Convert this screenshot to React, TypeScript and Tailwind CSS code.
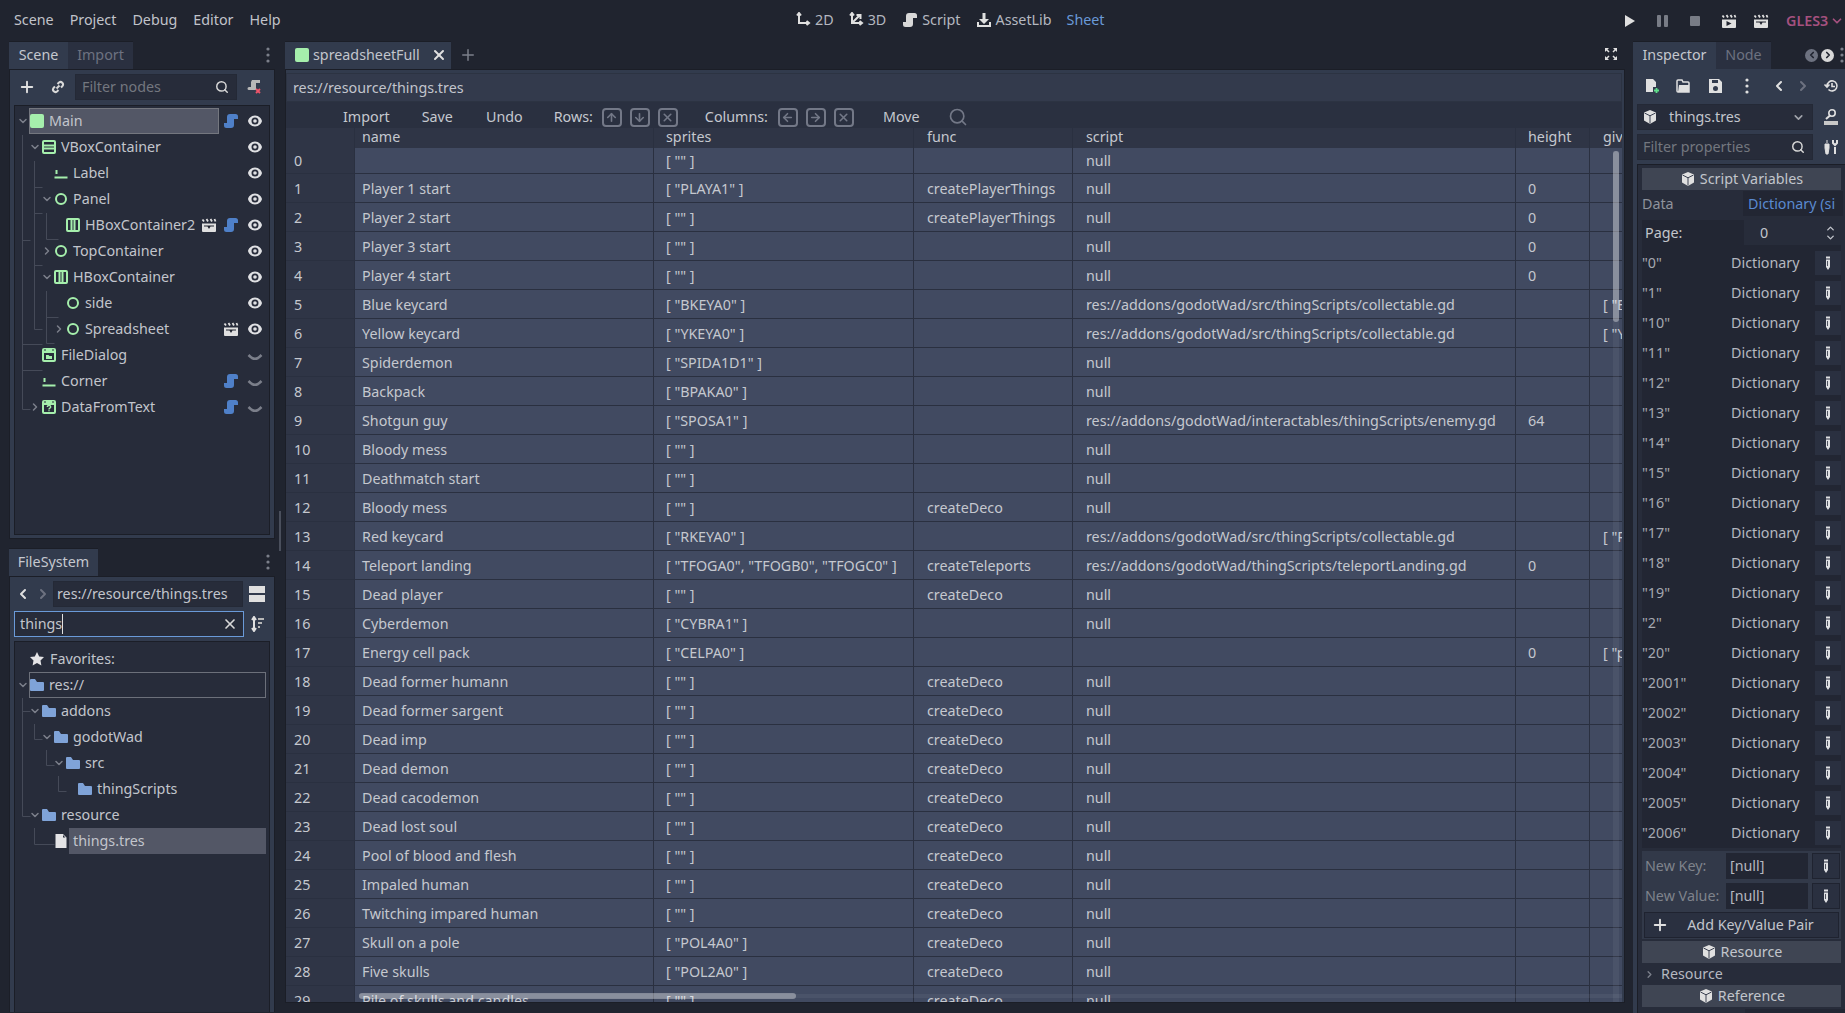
import { ArrowDown, ArrowLeft, ArrowRight, ArrowUp, ChevronDown, ChevronRight, ChevronLeft, ChevronUp, Plus, Search, X } from "lucide-react";
import type { ReactNode } from "react";

const GREEN = "#a5efac";

const Svg = ({ children, size = 16, className = "" }: { children: ReactNode; size?: number; className?: string }) => (
  <svg width={size} height={size} viewBox="0 0 16 16" className={`shrink-0 ${className}`}>
    {children}
  </svg>
);

const NodeIcon = () => <Svg><rect x="1" y="1" width="14" height="14" rx="2" fill={GREEN} /></Svg>;
const VBoxIcon = () => (
  <Svg><rect x="2" y="2" width="12" height="12" rx="1" fill="none" stroke={GREEN} strokeWidth="2" /><path d="M2 6.500h12M2 9.500h12" stroke={GREEN} strokeWidth="2" /></Svg>
);
const HBoxIcon = () => (
  <Svg><rect x="2" y="2" width="12" height="12" rx="1" fill="none" stroke={GREEN} strokeWidth="2" /><path d="M6.500 2v12M9.500 2v12" stroke={GREEN} strokeWidth="2" /></Svg>
);
const RingIcon = () => <Svg><circle cx="8" cy="8" r="5" fill="none" stroke={GREEN} strokeWidth="2" /></Svg>;
const LabelIcon = () => <Svg><path d="M3.500 5v4M1.500 12.500h13" stroke={GREEN} strokeWidth="2" fill="none" /></Svg>;
const WindowIcon = ({ q }: { q?: boolean }) => (
  <Svg>
    <path d="M3 1h10a2 2 0 0 1 2 2v10a2 2 0 0 1-2 2H3a2 2 0 0 1-2-2V3a2 2 0 0 1 2-2z" fill={GREEN} />
    <rect x="3" y="6" width="10" height="7" fill="#272c3a" />
    <path d="M3 3h2M11 3h2" stroke="#272c3a" strokeWidth="1" />
    {q ? (
      <path d="M6.300 8a1.700 1.500 0 1 1 2.600 1.200c-.6.4-.9.6-.9 1.200M8 11.200v1" stroke={GREEN} strokeWidth="1.400" fill="none" />
    ) : (
      <path d="M5 8h2.500l1 1H11v3H5z" fill={GREEN} />
    )}
  </Svg>
);
const ScriptIcon = () => (
  <Svg>
    <path d="M7 1a3 3 0 0 0-3 3v6H1v2.500A2.500 2.500 0 0 0 3.500 15H8a3 3 0 0 0 3-3V6h4V3.500A2.500 2.500 0 0 0 12.500 1z" fill="#4f80c8" />
  </Svg>
);
const ClapperIcon = ({ play }: { play?: boolean }) => (
  <Svg>
    <path d="M1 6.500h14V14a1 1 0 0 1-1 1H2a1 1 0 0 1-1-1z" fill="#e0e0e0" />
    <path d="M1.500 2.500l1.500 2M5.500 2l1.500 2.500M9.500 2l1.500 2.500M13.500 2l1 2.500" stroke="#e0e0e0" strokeWidth="1.800" />
    {play ? <path d="M5.500 8l5 2.500-5 2.500z" fill="#20242f" /> : <path d="M3 8.500h10v1H9.500l-1.500 2.500-1.500-2.500H3z" fill="#20242f" />}
  </Svg>
);
const Eye = () => (
  <Svg>
    <path fillRule="evenodd" d="M8 2.500C4 2.500 1.300 5.800 1 8c.3 2.200 3 5.500 7 5.500s6.700-3.300 7-5.500c-.3-2.200-3-5.500-7-5.500zM8 4.500a3.500 3.500 0 1 1 0 7 3.500 3.500 0 0 1 0-7z" fill="#dfe0e3" />
    <circle cx="8" cy="8" r="1.800" fill="#dfe0e3" />
  </Svg>
);
const Hidden = () => <Svg><path d="M1.500 8q2 2 3.500 3q3 1.500 6 0q1.500-1 3.500-3" fill="none" stroke="#7b7f8a" strokeWidth="2.600" /></Svg>;
const Folder = () => <Svg><path d="M2 2h4l2 3h6a1 1 0 0 1 1 1v7a1 1 0 0 1-1 1H2a1 1 0 0 1-1-1V3a1 1 0 0 1 1-1z" fill="#7fa3d8" /></Svg>;
const FileIcon = () => (
  <Svg><path fillRule="evenodd" d="M2.500 1H10l3.500 3.500V15h-11zM10 2v2.500h2.500z" fill="#e4e4e6" /></Svg>
);
const Pencil = () => (
  <Svg><path fillRule="evenodd" d="M6 1.500h4v2H6zM6 4.500h4V12l-2 3-2-3zM7 6v5h.8V6z" fill="#dfe0e3" /></Svg>
);
const Cube = ({ size = 16 }: { size?: number }) => (
  <Svg size={size}>
    <path d="M8 1l6 2.500v8L8 15l-6-3.500v-8z" fill="#e0e0e0" />
    <path d="M2.500 4L8 6.800 13.500 4M8 7v7.500" stroke="#3a4050" strokeWidth="1" fill="none" />
  </Svg>
);
const Arrow = ({ kind, text }: { kind: "2d" | "3d"; text: string }) => (
  <span className="flex items-center gap-[4px] text-[#b5b8c0]">
    <Svg>
      <path d="M4 1v10h10M2 3.500l2-2.500 2 2.500M11.500 9l2.500 2-2.500 2" fill="none" stroke="#e0e0e0" strokeWidth="2" />
      {kind === "3d" && <path d="M4 11l8-8M8.500 3H12.500v4" fill="none" stroke="#e0e0e0" strokeWidth="2" />}
    </Svg>
    {text}
  </span>
);

const Tab = ({ label, active, className }: { label: string; active?: boolean; className: string }) => (
  <div className={`flex items-center justify-center border-t border-[#1b1e27] pb-[2px] ${active ? "bg-[#323b4d] text-[#c5c8cf]" : "bg-[#2a3040] text-[#6d7280]"} ${className}`}>
    {label}
  </div>
);

const Dots = () => (
  <svg width="4" height="16" viewBox="0 0 4 16" className="shrink-0"><circle cx="2" cy="2" r="1.600" fill="#7b7f8a" /><circle cx="2" cy="8" r="1.600" fill="#7b7f8a" /><circle cx="2" cy="14" r="1.600" fill="#7b7f8a" /></svg>
);

interface TreeRow {
  depth: number;
  label: string;
  icon: ReactNode;
  arrow?: "down" | "right";
  extra?: ReactNode;
  trail?: ReactNode;
  box?: string;
}

const Row = ({ depth, label, icon, arrow, extra, trail, box }: TreeRow) => (
  <div className="relative flex h-[26px] items-center">
    {box && <div className={`absolute top-0 bottom-0 ${box}`} />}
    <div className="relative flex items-center" style={{ paddingLeft: depth * 12 }}>
      <span className="ml-[1px] flex w-[13px] justify-center text-[#7b7f8a]">
        {arrow === "down" && <ChevronDown size={12} strokeWidth={3} />}
        {arrow === "right" && <ChevronRight size={12} strokeWidth={3} />}
      </span>
      {icon}
      <span className="ml-[4px] text-[#c2c5cc]">{label}</span>
      {extra && <span className="ml-[6px]">{extra}</span>}
    </div>
    <div className="absolute top-[5px] right-[6px] flex items-center gap-[8px]">{trail}</div>
  </div>
);

const sceneRows: TreeRow[] = [
  { depth: 0, label: "Main", icon: <NodeIcon />, arrow: "down", trail: <><ScriptIcon /><Eye /></>, box: "left-[14px] w-[190px] bg-[#535766] border border-[#74777f]" },
  { depth: 1, label: "VBoxContainer", icon: <VBoxIcon />, arrow: "down", trail: <Eye /> },
  { depth: 2, label: "Label", icon: <LabelIcon />, trail: <Eye /> },
  { depth: 2, label: "Panel", icon: <RingIcon />, arrow: "down", trail: <Eye /> },
  { depth: 3, label: "HBoxContainer2", icon: <HBoxIcon />, extra: <ClapperIcon />, trail: <><ScriptIcon /><Eye /></> },
  { depth: 2, label: "TopContainer", icon: <RingIcon />, arrow: "right", trail: <Eye /> },
  { depth: 2, label: "HBoxContainer", icon: <HBoxIcon />, arrow: "down", trail: <Eye /> },
  { depth: 3, label: "side", icon: <RingIcon />, trail: <Eye /> },
  { depth: 3, label: "Spreadsheet", icon: <RingIcon />, arrow: "right", trail: <><ClapperIcon /><Eye /></> },
  { depth: 1, label: "FileDialog", icon: <WindowIcon />, trail: <Hidden /> },
  { depth: 1, label: "Corner", icon: <LabelIcon />, trail: <><ScriptIcon /><Hidden /></> },
  { depth: 1, label: "DataFromText", icon: <WindowIcon q />, arrow: "right", trail: <><ScriptIcon /><Hidden /></> },
];

const fileRows: TreeRow[] = [
  { depth: 0, label: "res://", icon: <Folder />, arrow: "down", box: "left-[14px] right-[3px] border border-[#6c707a]" },
  { depth: 1, label: "addons", icon: <Folder />, arrow: "down" },
  { depth: 2, label: "godotWad", icon: <Folder />, arrow: "down" },
  { depth: 3, label: "src", icon: <Folder />, arrow: "down" },
  { depth: 4, label: "thingScripts", icon: <Folder /> },
  { depth: 1, label: "resource", icon: <Folder />, arrow: "down" },
  { depth: 2, label: "things.tres", icon: <FileIcon />, box: "left-[54px] right-[3px] bg-[#535766]" },
];

const COLLECT = "res://addons/godotWad/src/thingScripts/collectable.gd";
const deco = (name: string, sprite = '[ "" ]') => [name, sprite, "createDeco", "null", "", ""];

const sheet: string[][] = [
  ["", '[ "" ]', "", "null", "", ""],
  ["Player 1 start", '[ "PLAYA1" ]', "createPlayerThings", "null", "0", ""],
  ["Player 2 start", '[ "" ]', "createPlayerThings", "null", "0", ""],
  ["Player 3 start", '[ "" ]', "", "null", "0", ""],
  ["Player 4 start", '[ "" ]', "", "null", "0", ""],
  ["Blue keycard", '[ "BKEYA0" ]', "", COLLECT, "", '[ "BLUE" ]'],
  ["Yellow keycard", '[ "YKEYA0" ]', "", COLLECT, "", '[ "YELLOW" ]'],
  ["Spiderdemon", '[ "SPIDA1D1" ]', "", "null", "", ""],
  ["Backpack", '[ "BPAKA0" ]', "", "null", "", ""],
  ["Shotgun guy", '[ "SPOSA1" ]', "", "res://addons/godotWad/interactables/thingScripts/enemy.gd", "64", ""],
  ["Bloody mess", '[ "" ]', "", "null", "", ""],
  ["Deathmatch start", '[ "" ]', "", "null", "", ""],
  deco("Bloody mess"),
  ["Red keycard", '[ "RKEYA0" ]', "", COLLECT, "", '[ "RED" ]'],
  ["Teleport landing", '[ "TFOGA0", "TFOGB0", "TFOGC0" ]', "createTeleports", "res://addons/godotWad/thingScripts/teleportLanding.gd", "0", ""],
  deco("Dead player"),
  ["Cyberdemon", '[ "CYBRA1" ]', "", "null", "", ""],
  ["Energy cell pack", '[ "CELPA0" ]', "", "", "0", '[ "plasma" ]'],
  deco("Dead former humann"),
  deco("Dead former sargent"),
  deco("Dead imp"),
  deco("Dead demon"),
  deco("Dead cacodemon"),
  deco("Dead lost soul"),
  deco("Pool of blood and flesh"),
  deco("Impaled human"),
  deco("Twitching impared human"),
  deco("Skull on a pole", '[ "POL4A0" ]'),
  deco("Five skulls", '[ "POL2A0" ]'),
  deco("Pile of skulls and candles"),
];

const COLS = "grid grid-cols-[69px_299px_260px_159px_443px_74px_33px]";
const CELL = "overflow-hidden whitespace-nowrap border-r border-[#2a3040]";
const PADS = ["pl-[7px]", "pl-[12px]", "pl-[13px]", "pl-[13px]", "pl-[12px]", "pl-[13px]"];

const ArrowBox = ({ children, className = "" }: { children: ReactNode; className?: string }) => (
  <span className={`flex h-[19px] w-[20px] items-center justify-center rounded-[4px] border-2 border-[#737887] text-[#737887] ${className}`}>{children}</span>
);

const SheetRow = ({ idx, cells }: { idx: number; cells: string[] }) => (
  <div className={`${COLS} border-b border-[#2a3040] text-[#c5c8cf] ${idx === 0 ? "h-[26px]" : "h-[29px]"}`}>
    <div className={`${CELL} bg-[#2f3546] pl-[8px] ${idx === 0 ? "leading-[26px]" : "leading-[30px]"}`}>{idx}</div>
    {cells.map((c, i) => (
      <div key={i} className={`${CELL} bg-[#414a61] ${PADS[i]} ${idx === 0 ? "leading-[26px]" : "leading-[30px]"}`}>{c}</div>
    ))}
  </div>
);

const dict = ["0", "1", "10", "11", "12", "13", "14", "15", "16", "17", "18", "19", "2", "20", "2001", "2002", "2003", "2004", "2005", "2006"];

const SectionBar = ({ label }: { label: string }) => (
  <div className="mx-[4px] flex h-[22px] items-center justify-center gap-[4px] bg-[#3f4553] text-[#c2c5cc]">
    <Cube />
    {label}
  </div>
);

export default function App() {
  return (
    <div className="flex h-[1013px] w-[1845px] flex-col overflow-hidden bg-[#20242f] font-['Noto_Sans',sans-serif] text-[14.3px]">
      {/* top menu */}
      <div className="relative flex h-[41px] shrink-0 items-center pb-[2px] text-[#c0c3ca]">
        <div className="ml-[14px] flex gap-[16px]">
          <span>Scene</span><span>Project</span><span>Debug</span><span>Editor</span><span>Help</span>
        </div>
        <div className="absolute left-[795px] top-[9px] flex items-center">
          <Arrow kind="2d" text="2D" />
          <span className="ml-[14px]"><Arrow kind="3d" text="3D" /></span>
          <span className="ml-[16px] flex items-center gap-[4px] text-[#b5b8c0]">
            <Svg><path d="M7 1a3 3 0 0 0-3 3v6H1v2.500A2.500 2.500 0 0 0 3.500 15H8a3 3 0 0 0 3-3V6h4V3.500A2.500 2.500 0 0 0 12.500 1z" fill="#d8d8d8" /></Svg>
            Script
          </span>
          <span className="ml-[15px] flex items-center gap-[4px] text-[#b5b8c0]">
            <Svg><path d="M6.500 1h3v6H13l-5 5-5-5h3.500zM1 10h2v3h10v-3h2v5H1z" fill="#e0e0e0" /></Svg>
            AssetLib
          </span>
          <span className="ml-[15px] text-[#6a9ad8]">Sheet</span>
        </div>
        <div className="absolute left-[1625px] top-[10px] flex items-center">
          <svg width="10" height="14" viewBox="0 0 10 14"><path d="M0 1l10 6-10 6z" fill="#e0e0e0" /></svg>
          <svg width="11" height="12" viewBox="0 0 11 12" className="ml-[22px]"><path d="M0 1a1 1 0 0 1 1-1h2a1 1 0 0 1 1 1v10a1 1 0 0 1-1 1H1a1 1 0 0 1-1-1zM7 1a1 1 0 0 1 1-1h2a1 1 0 0 1 1 1v10a1 1 0 0 1-1 1H8a1 1 0 0 1-1-1z" fill="#787c86" /></svg>
          <svg width="10" height="10" viewBox="0 0 10 10" className="ml-[22px]"><rect width="10" height="10" rx="1" fill="#787c86" /></svg>
          <span className="ml-[21px]"><ClapperIcon play /></span>
          <span className="ml-[16px]"><ClapperIcon /></span>
          <span className="ml-[17px] font-semibold text-[#a5517f]">GLES3</span>
          <ChevronDown size={14} className="ml-[2px] text-[#a5517f]" strokeWidth={3} />
        </div>
      </div>

      <div className="flex min-h-0 flex-1">
        {/* left docks */}
        <div className="ml-[9px] flex w-[266px] shrink-0 flex-col">
          <div className="flex h-[28px] shrink-0 items-center">
            <Tab label="Scene" active className="h-full w-[59px]" />
            <Tab label="Import" className="h-full w-[65px]" />
            <div className="ml-auto mr-[5px]"><Dots /></div>
          </div>
          <div className="flex h-[470px] shrink-0 flex-col border border-[#1b1e27] bg-[#323b4d] px-[4px] pt-[4px] pb-[3px]">
            <div className="flex h-[26px] shrink-0 items-center">
              <Plus size={18} strokeWidth={2.500} className="ml-[4px] text-[#e0e0e0]" />
              <svg width="16" height="16" viewBox="0 0 16 16" className="ml-[14px]"><path d="M6.500 9.500l3-3M5 7.500L3.500 9a2.500 2.500 0 0 0 3.500 3.500L8.500 11M7.500 5L9 3.500A2.500 2.500 0 0 1 12.500 7L11 8.500" fill="none" stroke="#d8d8d8" strokeWidth="2" /></svg>
              <div className="ml-[9px] flex h-[26px] w-[162px] items-center justify-between border border-[#242936] bg-[#272c3a] px-[6px] text-[#73777f]">
                Filter nodes
                <Search size={14} strokeWidth={2.500} className="mr-[1px] text-[#d8d8d8]" />
              </div>
              <svg width="16" height="16" viewBox="0 0 16 16" className="ml-[9px]"><path d="M6 1h8v3h-4v7H3a1 1 0 0 1 0-3h2V3z" fill="#b8b8b8" /><path d="M10 10l4 4M14 10l-4 4" stroke="#f0556a" strokeWidth="1.800" /></svg>
            </div>
            <div className="relative mt-[5px] min-h-0 flex-1 border border-[#1b1e27] bg-[#272c3a] py-[2px] pr-0">
              <svg className="absolute left-0 top-0" width="80" height="320" fill="none" stroke="#454a58" strokeWidth="1">
                <path d="M7.500 29v274.500h8M7.500 134.500h8M7.500 238.500h20M7.500 264.500h20M19.500 55v168.500h8M19.500 81.500h8M19.500 107.500h8M19.500 159.500h8M31.500 107v26.500h12M31.500 185v52.500h8M31.500 211.500h12" />
              </svg>
              {sceneRows.map((r) => <Row key={r.label} {...r} />)}
            </div>
          </div>
          <div className="mt-[9px] flex h-[28px] shrink-0 items-center">
            <Tab label="FileSystem" active className="h-full w-[89px]" />
            <div className="ml-auto mr-[5px]"><Dots /></div>
          </div>
          <div className="flex h-[436px] shrink-0 flex-col border border-b-0 border-[#1b1e27] bg-[#323b4d] px-[4px] pt-[4px]">
            <div className="flex h-[26px] shrink-0 items-center">
              <ChevronLeft size={16} strokeWidth={3} className="ml-[1px] text-[#e0e0e0]" />
              <ChevronRight size={16} strokeWidth={3} className="ml-[4px] text-[#6d7280]" />
              <div className="ml-[2px] flex h-[26px] w-[190px] items-center border border-[#242936] bg-[#272c3a] px-[3px] text-[#c2c5cc]">res://resource/things.tres</div>
              <div className="ml-[6px] flex flex-col gap-[2px]"><span className="h-[7px] w-[16px] bg-[#e0e0e0]" /><span className="h-[7px] w-[16px] bg-[#e0e0e0]" /></div>
            </div>
            <div className="mt-[4px] flex h-[26px] shrink-0 items-center">
              <div className="flex h-[26px] w-[230px] items-center justify-between border border-[#6a9ad8] bg-[#272c3a] px-[5px] text-[#c2c5cc]">
                <span className="border-r border-[#e0e0e0] leading-[20px]">things</span>
                <X size={16} strokeWidth={2.500} className="text-[#d8d8d8]" />
              </div>
              <svg width="16" height="16" viewBox="0 0 16 16" className="ml-[6px]"><path d="M4 1v14M2 4l2-3 2 3M2 12l2 3 2-3" fill="none" stroke="#e0e0e0" strokeWidth="2" /><path d="M8 3h6M8 7h4M8 11h2" stroke="#b8b8b8" strokeWidth="2" /></svg>
            </div>
            <div className="relative mt-[4px] min-h-0 flex-1 border border-b-0 border-[#1b1e27] bg-[#272c3a] pt-[4px]">
              <svg className="absolute left-0 top-0" width="80" height="230" fill="none" stroke="#454a58" strokeWidth="1">
                <path d="M7.500 56v118.500h8M7.500 69.500h8M19.500 82v15.500h8M19.500 186v16.500h20M31.500 108v15.500h8M43.500 134v15.500h8" />
              </svg>
              <div className="flex h-[26px] items-center pl-[14px] text-[#c2c5cc]">
                <svg width="16" height="16" viewBox="0 0 16 16" className="mr-[5px]"><path d="M8 1l2.200 4.500 4.800.6-3.500 3.400.9 4.900L8 11.900l-4.400 2.500.9-4.900L1 6.100l4.800-.6z" fill="#e4e4e6" /></svg>
                Favorites:
              </div>
              {fileRows.map((r) => <Row key={r.label} {...r} />)}
            </div>
          </div>
        </div>

        {/* splitter grab */}
        <div className="flex w-[10px] shrink-0 justify-center"><span className="mt-[470px] h-[40px] w-[2px] bg-[#4a4f5c]" /></div>

        {/* spreadsheet */}
        <div className="flex w-[1340px] shrink-0 flex-col">
          <div className="flex h-[28px] shrink-0 items-center">
            <div className="flex h-full w-[166px] items-center border-t border-[#1b1e27] bg-[#323b4d] pb-[1px] pl-[10px] text-[#c2c5cc]">
              <span className="h-[14px] w-[14px] rounded-[2px] bg-[#a5efac]" />
              <span className="ml-[4px]">spreadsheetFull</span>
              <X size={16} strokeWidth={3} className="ml-[11px] text-[#e0e0e0]" />
            </div>
            <Plus size={18} className="ml-[8px] text-[#7b7f8a]" />
            <svg width="16" height="16" viewBox="0 0 16 16" className="mb-[2px] ml-auto mr-[6px]"><path d="M2 2h4L2 6zM14 2v4l-4-4zM2 14v-4l4 4zM14 14h-4l4-4z" fill="#e0e0e0" /><path d="M3 3l3 3M13 3l-3 3M3 13l3-3M13 13l-3-3" stroke="#e0e0e0" strokeWidth="1.500" /></svg>
          </div>
          <div className="flex h-[934px] shrink-0 flex-col border border-[#1b1e27] bg-[#323b4d] pr-[2px]">
            <div className="mt-[3px] flex h-[29px] shrink-0 items-center border border-[#2c3342] bg-[#333a4c] pl-[6px] text-[#c2c5cc]">res://resource/things.tres</div>
            <div className="flex h-[26px] shrink-0 items-center bg-[#2a3040] pl-[57px] pt-[4px] text-[#c5c8cf]">
              <span>Import</span>
              <span className="ml-[32px]">Save</span>
              <span className="ml-[33px]">Undo</span>
              <span className="ml-[31px]">Rows:</span>
              <ArrowBox className="ml-[9px]"><ArrowUp size={13} strokeWidth={3} /></ArrowBox>
              <ArrowBox className="ml-[8px]"><ArrowDown size={13} strokeWidth={3} /></ArrowBox>
              <ArrowBox className="ml-[8px]"><X size={13} strokeWidth={3} /></ArrowBox>
              <span className="ml-[27px]">Columns:</span>
              <ArrowBox className="ml-[10px]"><ArrowLeft size={13} strokeWidth={3} /></ArrowBox>
              <ArrowBox className="ml-[8px]"><ArrowRight size={13} strokeWidth={3} /></ArrowBox>
              <ArrowBox className="ml-[8px]"><X size={13} strokeWidth={3} /></ArrowBox>
              <span className="ml-[29px]">Move</span>
              <Search size={20} strokeWidth={2} className="ml-[28px] text-[#737887]" />
            </div>
            <div className="relative min-h-0 flex-1 overflow-hidden">
              <div className={`${COLS} h-[20px] bg-[#2f3546] text-[#c5c8cf]`}>
                {["", "name", "sprites", "func", "script", "height", "give"].map((h, i) => (
                  <div key={i} className={`${CELL} leading-[18px] ${i === 0 ? "" : PADS[i - 1]}`}>{h}</div>
                ))}
              </div>
              {sheet.map((cells, i) => <SheetRow key={i} idx={i} cells={cells} />)}
              <div className="absolute right-[3px] top-[23px] bottom-0 w-[6px] bg-white/5" />
              <div className="absolute right-[3px] top-[23px] h-[171px] w-[6px] rounded-[3px] bg-white/35" />
              <div className="absolute left-[73px] right-0 bottom-[4px] h-[4px] bg-white/5" />
              <div className="absolute left-[73px] bottom-[3px] h-[6px] w-[437px] rounded-[3px] bg-white/35" />
            </div>
          </div>
        </div>

        {/* inspector */}
        <div className="ml-[8px] flex w-[212px] shrink-0 flex-col">
          <div className="flex h-[28px] shrink-0 items-center">
            <Tab label="Inspector" active className="h-full w-[83px]" />
            <Tab label="Node" className="h-full w-[55px]" />
            <span className="ml-auto flex h-[13px] w-[13px] items-center justify-center rounded-full bg-[#6d7280]"><ChevronLeft size={10} strokeWidth={4} className="text-[#20242f]" /></span>
            <span className="ml-[3px] flex h-[13px] w-[13px] items-center justify-center rounded-full bg-[#d8d8d8]"><ChevronRight size={10} strokeWidth={4} className="text-[#20242f]" /></span>
            <span className="ml-[6px] mr-[1px]"><Dots /></span>
          </div>
          <div className="flex min-h-0 flex-1 flex-col bg-[#323b4d] pl-[4px]">
            <div className="flex h-[35px] shrink-0 items-center pb-[1px] text-[#d8d8d8]">
              <svg width="16" height="16" viewBox="0 0 16 16" className="ml-[7px]"><path d="M2 1h7l3 3v5H9v5H2z" fill="#e0e0e0" /><path d="M12.500 10v5M10 12.500h5" stroke="#5fe08a" strokeWidth="1.800" /></svg>
              <svg width="16" height="16" viewBox="0 0 16 16" className="ml-[15px]"><path d="M2 5V3a1 1 0 0 1 1-1h4l1 2h5a1 1 0 0 1 1 1v9H3a1 1 0 0 1-1-1z" fill="none" stroke="#e0e0e0" strokeWidth="1.500" /><path d="M4 7h10v7H3z" fill="#e0e0e0" /></svg>
              <svg width="16" height="16" viewBox="0 0 16 16" className="ml-[16px]"><path fillRule="evenodd" d="M2 1h10l3 3v11H2zM5 2v3h6V2zM8.500 8a2.500 2.500 0 1 0 0 5 2.500 2.500 0 0 0 0-5z" fill="#e0e0e0" /></svg>
              <span className="ml-[22px]"><svg width="4" height="16" viewBox="0 0 4 16"><circle cx="2" cy="2" r="1.600" fill="#e0e0e0" /><circle cx="2" cy="8" r="1.600" fill="#e0e0e0" /><circle cx="2" cy="14" r="1.600" fill="#e0e0e0" /></svg></span>
              <ChevronLeft size={16} strokeWidth={3} className="ml-[22px] text-[#e0e0e0]" />
              <ChevronRight size={16} strokeWidth={3} className="ml-[8px] text-[#6d7280]" />
              <svg width="16" height="16" viewBox="0 0 16 16" className="ml-[12px]"><path d="M4 8a5 5 0 1 1 1.500 3.500M1.500 6.500L4 9l2.500-2.500M9 5v3.500h3" fill="none" stroke="#e0e0e0" strokeWidth="1.600" /></svg>
            </div>
            <div className="flex h-[26px] shrink-0 items-center">
              <div className="flex h-[26px] w-[176px] items-center border border-[#242936] bg-[#272c3a] pl-[4px] text-[#c2c5cc]">
                <Cube />
                <span className="ml-[11px]">things.tres</span>
                <ChevronDown size={13} strokeWidth={3} className="ml-auto mr-[7px] text-[#a0a3ab]" />
              </div>
              <svg width="16" height="18" viewBox="0 0 16 18" className="ml-[10px]"><circle cx="9" cy="5" r="3.200" fill="none" stroke="#e0e0e0" strokeWidth="1.600" /><path d="M7 7.500l-4 3.500" stroke="#e0e0e0" strokeWidth="2" /><path d="M1 13h14v4H1z" fill="#c8c8c8" /></svg>
            </div>
            <div className="mt-[4px] flex h-[26px] shrink-0 items-center">
              <div className="flex h-[26px] w-[176px] items-center justify-between border border-[#242936] bg-[#272c3a] px-[5px] text-[#73777f]">
                Filter properties
                <Search size={14} strokeWidth={2.500} className="mr-[2px] text-[#d8d8d8]" />
              </div>
              <svg width="16" height="16" viewBox="0 0 16 16" className="ml-[10px]"><path d="M4 1v3M2 5h4v4l-1 6H3L2 9z" fill="#e0e0e0" stroke="#e0e0e0" /><path d="M12 8v7M10 1v3l2 2 2-2V1" fill="none" stroke="#e0e0e0" strokeWidth="2" /></svg>
            </div>
            <div className="mt-[4px] min-h-0 flex-1 overflow-hidden border-t border-l border-[#1b1e27] bg-[#272c3a] pt-[3px] text-[#c2c5cc]">
              <SectionBar label="Script Variables" />
              <div className="flex h-[27px] items-center justify-between pl-[4px] pr-[2px]">
                <span className="text-[#8f939c]">Data</span>
                <span className="flex h-[25px] w-[100px] items-center overflow-hidden whitespace-nowrap bg-[#222633] pl-[5px] text-[#5a8ad0]">Dictionary (si</span>
              </div>
              <div className="mx-[4px] mt-[3px] flex h-[25px] items-center bg-[#222633] pl-[3px]">
                Page:
                <span className="ml-auto flex h-[25px] w-[97px] items-center bg-[#272c3a] pl-[16px]">
                  0
                  <span className="ml-auto mr-[5px] flex flex-col text-[#c2c5cc]">
                    <ChevronUp size={11} strokeWidth={3} className="-mb-[2px]" />
                    <ChevronDown size={11} strokeWidth={3} />
                  </span>
                </span>
              </div>
              <div className="mx-[4px] bg-[#222633] pt-[3px]">
                {dict.map((k) => (
                  <div key={k} className="flex h-[30px] items-center">
                    <span className="w-[89px] text-[#a5a8b0]">"{k}"</span>
                    <span className="text-[#b5b8c0]">Dictionary</span>
                    <span className="ml-auto flex h-[24px] w-[26px] items-center justify-center bg-[#2a3040]"><Pencil /></span>
                  </div>
                ))}
              </div>
              <div className="mx-[4px] mt-[3px] flex h-[29px] items-center bg-[#323949] pl-[3px] text-[#7f838c]">
                <span className="w-[81px]">New Key:</span>
                <span className="flex h-[26px] w-[82px] items-center bg-[#222633] pl-[4px] text-[#b5b8c0]">[null]</span>
                <span className="ml-[4px] flex h-[26px] w-[28px] items-center justify-center border border-[#1f2330] bg-[#2a3040]"><Pencil /></span>
              </div>
              <div className="mx-[4px] flex h-[31px] items-center bg-[#323949] pl-[3px] text-[#7f838c]">
                <span className="w-[81px] whitespace-nowrap">New Value:</span>
                <span className="flex h-[26px] w-[82px] items-center bg-[#222633] pl-[4px] text-[#b5b8c0]">[null]</span>
                <span className="ml-[4px] flex h-[26px] w-[28px] items-center justify-center border border-[#1f2330] bg-[#2a3040]"><Pencil /></span>
              </div>
              <div className="mx-[4px] flex h-[28px] items-center bg-[#323949] px-[2px]">
                <div className="relative flex h-[26px] flex-1 items-center justify-center border border-[#1f2330] bg-[#2a3040] pl-[18px]">
                  <Plus size={18} strokeWidth={2.500} className="absolute left-[6px] text-[#e0e0e0]" />
                  Add Key/Value Pair
                </div>
              </div>
              <div className="mt-[2px]"><SectionBar label="Resource" /></div>
              <div className="flex h-[22px] items-center pl-[6px] text-[#b5b8c0]">
                <ChevronRight size={11} strokeWidth={3} className="mr-[6px] text-[#7b7f8a]" />
                Resource
              </div>
              <SectionBar label="Reference" />
              <div className="ml-auto mt-[2px] h-[10px] w-[100px] bg-[#222633]" />
            </div>
          </div>
        </div>
      </div>
    </div>
  );
}
